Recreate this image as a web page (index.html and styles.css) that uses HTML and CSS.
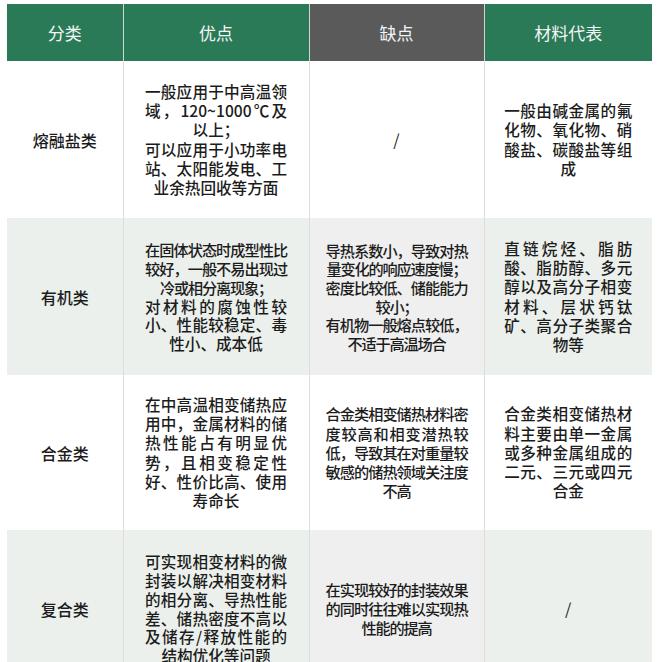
FILE: index.html
```html
<!DOCTYPE html>
<html lang="zh-CN">
<head>
<meta charset="utf-8">
<title>相变储热材料对比</title>
<link rel="stylesheet" href="styles.css">
</head>
<body>
<table class="tbl">
  <colgroup>
    <col class="col1"><col class="col2"><col class="col3"><col class="col4">
  </colgroup>
  <thead>
    <tr>
      <th class="h-green">分类</th>
      <th class="h-green">优点</th>
      <th class="h-gray">缺点</th>
      <th class="h-green">材料代表</th>
    </tr>
  </thead>
  <tbody>
    <tr class="row r1">
      <td class="cat">熔融盐类</td>
      <td><div class="txt w2">一般应用于中高温领域，120~1000℃及以上；<br>可以应用于小功率电站、太阳能发电、工业余热回收等方面</div></td>
      <td class="con"><div class="txt w3 slash">/</div></td>
      <td><div class="txt w4">一般由碱金属的氟化物、氧化物、硝酸盐、碳酸盐等组成</div></td>
    </tr>
    <tr class="row r2 alt">
      <td class="cat">有机类</td>
      <td><div class="txt w2 tight"><span class="n">在固体状态时成型性比较好，一般不易出现过冷或相分离现象；</span><br>对材料的腐蚀性较小、性能较稳定、毒性小、成本低</div></td>
      <td class="con"><div class="txt w3 narrow tight">导热系数小，导致对热量变化的响应速度慢；<br>密度比较低、储能能力较小；<br>有机物一般熔点较低，不适于高温场合</div></td>
      <td><div class="txt w4">直链烷烃、脂肪酸、脂肪醇、多元醇以及高分子相变材料、层状钙钛矿、高分子类聚合物等</div></td>
    </tr>
    <tr class="row r3">
      <td class="cat">合金类</td>
      <td><div class="txt w2">在中高温相变储热应用中，金属材料的储热性能占有明显优势，且相变稳定性好、性价比高、使用寿命长</div></td>
      <td class="con"><div class="txt w3 narrow">合金类相变储热材料密度较高和相变潜热较低，导致其在对重量较敏感的储热领域关注度不高</div></td>
      <td><div class="txt w4">合金类相变储热材料主要由单一金属或多种金属组成的二元、三元或四元合金</div></td>
    </tr>
    <tr class="row r4 alt">
      <td class="cat">复合类</td>
      <td><div class="txt w2 tight">可实现相变材料的微封装以解决相变材料的相分离、导热性能差、储热密度不高以及储存/释放性能的结构优化等问题</div></td>
      <td class="con"><div class="txt w3 narrow">在实现较好的封装效果的同时往往难以实现热性能的提高</div></td>
      <td><div class="txt w4 slash">/</div></td>
    </tr>
  </tbody>
</table>
</body>
</html>
```

FILE: styles.css
```css
html, body {
  margin: 0;
  padding: 0;
  background: #ffffff;
}

body {
  font-family: "Noto Sans CJK SC", "Noto Sans", sans-serif;
  color: #1c1c1c;
}

.tbl {
  margin: 4px 0 0 7px;
  width: 645px;
  border-collapse: collapse;
  table-layout: fixed;
}

.col1 { width: 116px; }
.col2 { width: 186px; }
.col3 { width: 175px; }
.col4 { width: 168px; }

th {
  height: 57px;
  padding: 0;
  font-size: 17px;
  font-weight: 400;
  color: #f3f5f4;
  text-align: center;
  vertical-align: middle;
}

.h-green { background: #2a7a57; }
.h-gray { background: #5a5a5a; }

th + th { border-left: 1px solid #cfd6d2; }

td {
  padding: 0;
  text-align: center;
  vertical-align: middle;
  border-left: 1px solid #dcdedd;
  background: #ffffff;
}

td:first-child { border-left: none; }

.r1 td { height: 157px; }
.r2 td { height: 157px; }
.r3 td { height: 155px; }
.r4 td { height: 157px; }

.alt td { background: #ebf0ec; }
.alt td.con { background: #eeefee; }

.cat {
  font-size: 16px;
  font-weight: 500;
}

.txt {
  margin: 0 auto;
  font-size: 15.6px;
  line-height: 19.2px;
  font-weight: 500;
  text-align: justify;
  text-align-last: center;
  text-autospace: no-autospace;
  text-spacing-trim: space-all;
}

.tight { line-height: 18.7px; }

.w2 { width: 142px; }
.w3 { width: 142px; }
.w4 { width: 128px; }

.narrow {
  font-size: 15.2px;
  letter-spacing: -1.2px;
  line-height: 19.2px;
}
.narrow.tight { line-height: 18.6px; }

.n {
  font-size: 15.2px;
  letter-spacing: -1.2px;
}

.slash {
  font-weight: 400;
  font-size: 16px;
}
```
